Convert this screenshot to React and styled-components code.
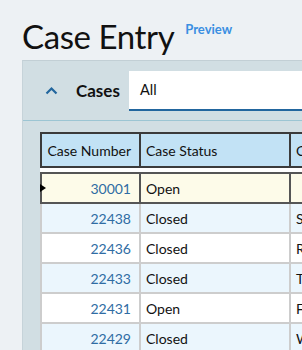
import React from "react";
import styled, { createGlobalStyle } from "styled-components";

const Global = createGlobalStyle`
  html, body { margin: 0; padding: 0; overflow: hidden; background: #edf1f4; }
  body { font-family: Lato, "Noto Sans", sans-serif; color: #111; }
  #root { width: 302px; height: 350px; overflow: hidden; }
`;

const Page = styled.div`
  padding: 18px 0 0 22px;
  width: 760px;
`;

const TitleRow = styled.div`
  display: flex;
  align-items: flex-start;
  gap: 11px;
  height: 42px;
`;

const Title = styled.h1`
  margin: 0;
  font-size: 33px;
  font-weight: 400;
  line-height: 36px;
  letter-spacing: -0.4px;
`;

const Badge = styled.span`
  font-size: 13px;
  font-weight: 700;
  color: #3a8fe2;
  line-height: 16px;
  margin-top: 3px;
`;

const Panel = styled.section`
  background: #d1dee3;
  border-top: 1px solid #c2cfd5;
  border-left: 1px solid #c6d3d9;
`;

const PanelHeader = styled.div`
  display: flex;
  align-items: center;
  height: 59px;
  border-bottom: 1px solid #9cc5d3;
  padding-left: 22px;
`;

const Chevron = styled.svg`
  width: 13px;
  height: 9px;
  flex: none;
`;

const PanelTitle = styled.span`
  font-size: 17px;
  font-weight: 700;
  margin-left: 18px;
  width: 53px;
`;

const Select = styled.div`
  flex: 1;
  height: 38px;
  background: #fff;
  border-bottom: 2px solid #22669e;
  display: flex;
  align-items: center;
  padding-left: 11px;
  font-size: 14.5px;
`;

const TableArea = styled.div`
  padding: 11px 0 0 17px;
`;

const Table = styled.div`
  display: flex;
  flex-direction: column;
  width: 520px;
`;

const HeadRow = styled.div`
  display: flex;
  background: #c2e2f5;
  border-top: 2px solid #3b3b3b;
  border-bottom: 2px solid #3b3b3b;
  height: 32px;
  margin-bottom: 4px;
  box-shadow: 0 4px 0 #fff;
`;

const HeadCell = styled.div`
  width: ${(p) => p.$w}px;
  flex: none;
  display: flex;
  align-items: center;
  justify-content: ${(p) => (p.$right ? "flex-end" : "flex-start")};
  padding: 0 ${(p) => (p.$right ? 8 : 0)}px 0 ${(p) => (p.$right ? 0 : 5)}px;
  box-sizing: border-box;
  border-right: 2px solid #3b3b3b;
  border-left: ${(p) => (p.$first ? "2px solid #3b3b3b" : "none")};
  font-size: 14px;
  white-space: nowrap;
  overflow: hidden;
`;

const Row = styled.div`
  position: relative;
  display: flex;
  height: 28px;
  background: ${(p) => (p.$selected ? "#fdfbe9" : p.$alt ? "#ebf6fd" : "#ffffff")};
  border-top: ${(p) => (p.$selected ? "2px solid #555" : "none")};
  border-bottom: 2px solid ${(p) => (p.$selected ? "#555" : "#cdcdcd")};
`;

const Cell = styled.div`
  width: ${(p) => p.$w}px;
  flex: none;
  display: flex;
  align-items: center;
  justify-content: ${(p) => (p.$right ? "flex-end" : "flex-start")};
  padding: 0 ${(p) => (p.$right ? 8 : 0)}px 0 ${(p) => (p.$right ? 0 : 5)}px;
  box-sizing: border-box;
  border-right: 2px solid ${(p) => p.$line};
  border-left: ${(p) => (p.$first ? `2px solid ${p.$line}` : "none")};
  font-size: 14px;
  color: ${(p) => (p.$link ? "#2f6ca3" : "#111")};
  white-space: nowrap;
  overflow: hidden;
`;

const Marker = styled.span`
  position: absolute;
  left: 0;
  top: 50%;
  transform: translateY(-50%);
  width: 0;
  height: 0;
  border-top: 4.5px solid transparent;
  border-bottom: 4.5px solid transparent;
  border-left: 6px solid #000;
`;

const rows = [
  { num: "30001", status: "Open", sub: "", selected: true },
  { num: "22438", status: "Closed", sub: "Software issue" },
  { num: "22436", status: "Closed", sub: "Request for info" },
  { num: "22433", status: "Closed", sub: "Training" },
  { num: "22431", status: "Open", sub: "Follow-up" },
  { num: "22429", status: "Closed", sub: "Website access" },
];

const widths = [101, 150, 200];

export default function App() {
  return (
    <>
      <Global />
      <Page>
        <TitleRow>
          <Title>Case Entry</Title>
          <Badge>Preview</Badge>
        </TitleRow>
        <Panel>
          <PanelHeader>
            <Chevron viewBox="0 0 13 9">
              <path d="M1.5 7.5 L6.5 2.5 L11.5 7.5" fill="none" stroke="#22669e" strokeWidth="2.2" />
            </Chevron>
            <PanelTitle>Cases</PanelTitle>
            <Select>All</Select>
          </PanelHeader>
          <TableArea>
            <Table>
              <HeadRow>
                <HeadCell $w={widths[0]} $right $first>Case Number</HeadCell>
                <HeadCell $w={widths[1]}>Case Status</HeadCell>
                <HeadCell $w={widths[2]}>Case Subject</HeadCell>
              </HeadRow>
              {rows.map((r, i) => {
                const line = r.selected ? "#555" : "#cdcdcd";
                return (
                  <Row key={r.num} $selected={r.selected} $alt={i % 2 === 1}>
                    {r.selected && <Marker />}
                    <Cell $w={widths[0]} $right $first $link $line={line}>{r.num}</Cell>
                    <Cell $w={widths[1]} $line={line}>{r.status}</Cell>
                    <Cell $w={widths[2]} $line={line}>{r.sub}</Cell>
                  </Row>
                );
              })}
            </Table>
          </TableArea>
        </Panel>
      </Page>
    </>
  );
}
